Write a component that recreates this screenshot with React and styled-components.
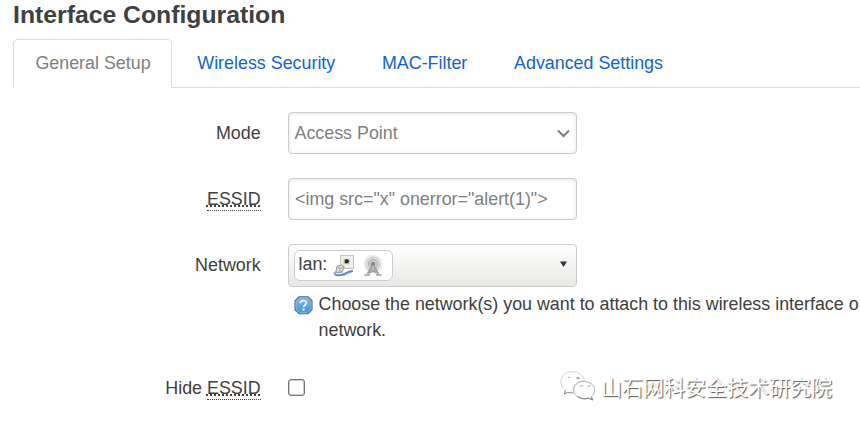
import React from "react";
import styled, { createGlobalStyle, css } from "styled-components";

const GlobalStyle = createGlobalStyle`
  * { box-sizing: border-box; }
  html, body { margin: 0; padding: 0; overflow: hidden; background: #fff; }
  body {
    font-family: "Liberation Sans", Arial, sans-serif;
    font-size: 17.875px;
    line-height: 26px;
    color: #404040;
  }
`;

const Page = styled.main`
  width: 860px;
  height: 425px;
  overflow: hidden;
  padding-left: 13px;
`;

const Title = styled.h3`
  margin: 0;
  height: 39px;
  font-size: 24.75px;
  line-height: 29px;
  font-weight: bold;
`;

const Tabs = styled.nav`
  display: flex;
  height: 49px;
  gap: 2.75px;
  border-bottom: 1px solid #ddd;
`;

const Tab = styled.a`
  height: 49px;
  padding: 0 20.6px 0 21.4px;
  border: 1px solid transparent;
  border-radius: 5px 5px 0 0;
  line-height: 46px;
  white-space: nowrap;
  color: #1064d6;
  ${(p) =>
    p.$active &&
    css`
      color: #808080;
      background: #fff;
      border-color: #ddd #ddd #fff;
    `}
`;

const Form = styled.form`
  display: flex;
  flex-direction: column;
  gap: 24px;
  padding-top: 24px;
`;

const Row = styled.div`
  display: grid;
  grid-template-columns: 247.6px 289px;
  column-gap: 27.4px;
  align-items: start;
  min-height: 42px;
`;

const Label = styled.label`
  text-align: right;
  line-height: 26px;
  padding-top: ${(p) => (p.$flush ? 0 : 8)}px;
`;

const Abbr = styled.abbr`
  display: inline-block;
  line-height: 22px;
  border-bottom: 1px dotted #404040;
  text-decoration: underline dotted 1.5px #404040;
  text-underline-offset: 0;
  text-decoration-skip-ink: none;
`;

const Field = styled.div`
  display: flex;
  align-items: center;
  justify-content: space-between;
  width: 289px;
  height: 42px;
  padding: 0 6px 0 5.5px;
  border: 1px solid #ccc;
  border-radius: 4px;
  color: #808080;
  box-shadow: inset 0 1px 4px rgba(0, 0, 0, 0.1);
`;

const TextInput = styled.input`
  width: 289px;
  height: 42px;
  padding: 0 6px;
  border: 1px solid #ccc;
  border-radius: 4px;
  outline: 0;
  color: #808080;
  font: inherit;
  box-shadow: inset 0 1px 4px rgba(0, 0, 0, 0.1);
`;

const NetworkSelect = styled.div`
  display: flex;
  align-items: center;
  justify-content: space-between;
  width: 289px;
  height: 43px;
  padding: 0 9px 0 5px;
  border: 1px solid #ccc;
  border-radius: 4px;
  background: linear-gradient(#fff, #e9e8e6);

  > svg { margin-top: -3px; }
`;

const Chip = styled.span`
  display: flex;
  align-items: center;
  width: 99px;
  height: 31px;
  padding: 0 3.5px 3px;
  border: 1px solid #ccc;
  border-radius: 6px;
  background: #fff;

  svg { flex: none; margin: 4px 0 0 6px; }
  svg + svg { margin-left: 7px; }
`;

const Help = styled.div`
  display: flex;
  width: 620px;
  padding: 4px 0 0 6px;
  white-space: nowrap;

  svg { flex: none; margin: 5px 5.6px 0 0; }
`;

const Checkbox = styled.input`
  appearance: none;
  width: 17px;
  height: 17px;
  margin: 0;
  border: 1px solid #767676;
  border-radius: 3px;
  background: #fff;
  box-shadow: inset 0 0 0 0.5px #999;
`;

const HideRow = styled(Row)`
  margin-top: 8px;
`;

const CheckboxCell = styled.div`
  display: flex;
  padding-top: 4px;
`;

const Watermark = styled.footer`
  position: absolute;
  left: 560px;
  top: 369px;
  display: flex;
  align-items: center;
  gap: 4px;
  height: 34px;
  color: #fff;
  font: 21px/34px "Noto Sans CJK SC", sans-serif;
  white-space: nowrap;
  text-shadow: 1px 1px 1px #555;
`;

const Chevron = () => (
  <svg width="13" height="9" viewBox="0 0 13 9" fill="none">
    <path d="M1 1.5 6.5 7 12 1.5" stroke="#808080" strokeWidth="2" />
  </svg>
);

const Arrow = () => (
  <svg width="7" height="6" viewBox="0 0 7 6">
    <path d="M0 .5h7L3.5 6Z" fill="#333" />
  </svg>
);

const EthernetIcon = () => (
  <svg width="22" height="22" viewBox="0 0 22 22" fill="none">
    <rect x="7.5" y=".5" width="13" height="13" fill="#eeeeea" stroke="#c6c6c0" />
    <rect x="10.5" y="3.8" width="6.4" height="5.4" fill="#c9c9a0" />
    <rect x="11.7" y="4.2" width="4" height="4" rx="1.5" fill="#292923" />
    <path d="M20 15.8c-5 1-7 4.4-12 4.3-4 0-7-.4-6.4-2 .8-2 5-1.4 8-1" stroke="#8fb0df" strokeWidth="2.2" />
    <path d="M2 20c6 1.6 9-.8 12-2.6 2-1 4-1.3 6-1.1" stroke="#5e89c9" strokeWidth="1.5" />
    <path d="m4 11.5 4.5-1.7 2.7 2-1.7 4.2-4.3 2-2.2-1.5Z" fill="#e0e0e0" stroke="#969696" />
    <path d="m5 12 2 1.5 3-1.5M7 13.5 6 17" stroke="#aaa" />
  </svg>
);

const WirelessIcon = () => (
  <svg width="22" height="22" viewBox="0 0 22 22" fill="none">
    <circle cx="11" cy="9" r="9.5" fill="#eee" />
    <circle cx="11" cy="9" r="7" fill="#ddd" stroke="#c9c9c9" />
    <circle cx="11" cy="9" r="4.5" fill="#cfcfcf" stroke="#aaa" />
    <circle cx="11" cy="9" r="2.2" fill="#8b8b8b" />
    <path d="m10 11-4.5 8M12 11l4.5 8M8 14.5l7 3.5M14 14.5 7 18" stroke="#a0a0a0" strokeWidth="1.7" />
    <path d="M2.5 20h5.5M14 20h5.5" stroke="#b4b4b4" strokeWidth="2.2" />
  </svg>
);

const HelpIcon = () => (
  <svg width="19" height="20" viewBox="0 0 19 20">
    <defs>
      <linearGradient id="helpBlue" x1="0" y1="0" x2="0" y2="1">
        <stop stopColor="#88b9e5" />
        <stop offset="1" stopColor="#3f93da" />
      </linearGradient>
    </defs>
    <path d="M5 .8h9l4 4v9l-4 4H5l-4-4v-9Z" fill="url(#helpBlue)" stroke="#4b6587" strokeWidth="1.1" />
    <path d="M5.5 1.9h8L17 5.4v8l-3.5 3.4h-8L2 13.4v-8Z" fill="none" stroke="#83bbee" />
    <path d="M6.5 7.3C6.7 3.5 12.7 3.8 12.4 7c-.2 2-2.8 2-2.8 4.2" fill="none" stroke="#e8f3fd" strokeWidth="1.8" />
    <rect x="8.5" y="12.6" width="2.1" height="2.1" fill="#e8f3fd" />
  </svg>
);

const WechatIcon = () => (
  <svg width="37" height="32" viewBox="0 0 37 32" fill="#fff" strokeLinejoin="round">
    <path d="M7 22.8 4.5 24 5.5 20C-1.5 15.5-.5 5.5 7.5 2.5c8-3 16.5 1.8 17.2 8.2-8 .2-12.7 5-11.2 11.3-2.2.3-4.4.3-6.5.8Z" stroke="#c4c4c4" strokeWidth=".7" />
    <path d="M5.3 20.3 4.3 24l3.2-1.6c2 .6 4 .7 6 .5" fill="none" stroke="#888" strokeWidth=".9" />
    <path d="M31.5 26.8c4.4-3.6 4-10-.5-13.2-5-3.6-13-2.4-16 2-3.5 5.3.3 11.8 7 13 2.2.4 4.3.2 6.5-.5l4 1.9Z" stroke="#a0a0a0" strokeWidth=".8" />
    <path d="m31.5 26.8 1 3.2-4-1.8c-4 1.3-8 .4-11-1.8" fill="none" stroke="#777" strokeWidth=".9" />
    <g fill="none" stroke="#999" strokeWidth=".9">
      <path d="M7.8 8q1-2 2.3 0M16.5 8.2q1.5-2.2 3 0q-1.5 1.2-3 0M20 16.5q1.5-2 3 0M27.5 16.5q1.5-2 3 0" />
    </g>
  </svg>
);

const tabs = ["General Setup", "Wireless Security", "MAC-Filter", "Advanced Settings"];

export default function App() {
  return (
    <Page>
      <GlobalStyle />
      <Title>Interface Configuration</Title>
      <Tabs>
        {tabs.map((name, i) => (
          <Tab key={name} $active={i === 0}>{name}</Tab>
        ))}
      </Tabs>
      <Form>
        <Row>
          <Label>Mode</Label>
          <Field>Access Point<Chevron /></Field>
        </Row>
        <Row>
          <Label><Abbr>ESSID</Abbr></Label>
          <TextInput readOnly value={'<img src="x" onerror="alert(1)">'} />
        </Row>
        <Row>
          <Label>Network</Label>
          <div>
            <NetworkSelect>
              <Chip>lan:<EthernetIcon /><WirelessIcon /></Chip>
              <Arrow />
            </NetworkSelect>
            <Help>
              <HelpIcon />
              <span>
                Choose the network(s) you want to attach to this wireless interface o
                <br />
                network.
              </span>
            </Help>
          </div>
        </Row>
        <HideRow>
          <Label $flush>Hide <Abbr>ESSID</Abbr></Label>
          <CheckboxCell><Checkbox type="checkbox" /></CheckboxCell>
        </HideRow>
      </Form>
      <Watermark><WechatIcon /><span>山石网科安全技术研究院</span></Watermark>
    </Page>
  );
}
